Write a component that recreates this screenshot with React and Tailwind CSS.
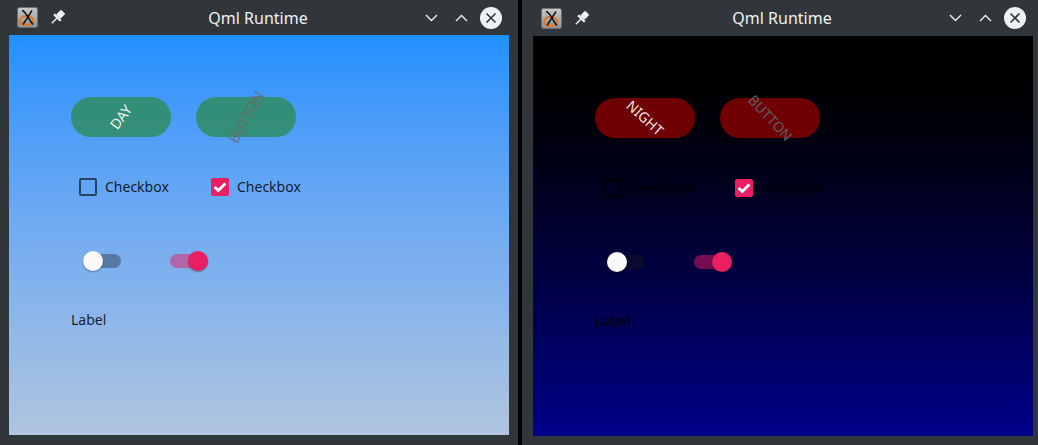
import React from 'react';

const themes = {
  day: {
    titleH: 'h-[35px]',
    bottom: 'h-[10px]',
    content: 'bg-linear-to-b from-[#1e90ff] to-[#b0c4de]',
    button: 'bg-[#2e8b57]/80',
    first: 'DAY',
    firstCls: 'text-[#f4f4f4] rotate-[-53deg]',
    secondCls: 'text-[#6c6c6c] rotate-[-61deg]',
    boxBorder: 'border-black/60',
    text: 'text-black/85',
    trackOff: 'bg-black/30',
    trackOn: 'bg-[#e91e63]/50',
  },
  night: {
    titleH: 'h-[36px]',
    bottom: 'h-[9px]',
    content: 'bg-linear-to-b from-black to-[#00008b]',
    button: 'bg-[#8b0000]/80',
    first: 'NIGHT',
    firstCls: 'text-[#eee6e6] rotate-[42deg]',
    secondCls: 'text-[#5e5e68] rotate-[47deg]',
    boxBorder: 'border-black',
    text: 'text-black',
    trackOff: 'bg-[#0a0a30]',
    trackOn: 'bg-[#e91e63]/50',
  },
};

function AppIcon() {
  return (
    <svg width="21" height="21" viewBox="0 0 21 21">
      <defs>
        <linearGradient id="ai" x1="0" y1="0" x2="0" y2="1">
          <stop offset="0" stopColor="#c9c9c9" />
          <stop offset="1" stopColor="#8e8e8e" />
        </linearGradient>
      </defs>
      <rect x="0.5" y="0.5" width="20" height="20" rx="2" fill="url(#ai)" stroke="#6f6f6f" />
      <ellipse cx="9.5" cy="13.5" rx="6.5" ry="4.5" fill="none" stroke="#e8751a" strokeWidth="1.8" />
      <path d="M5 3.5 C9 4 11 12 16 17.5" fill="none" stroke="#111" strokeWidth="1.6" />
      <path d="M15 3.5 L6 17.5" fill="none" stroke="#111" strokeWidth="1.4" />
    </svg>
  );
}

function PinIcon() {
  return (
    <svg width="15" height="15" viewBox="0 0 14 14">
      <g transform="rotate(45 7 7)" fill="#eff0f1">
        <rect x="4.2" y="-0.5" width="5.6" height="6.5" rx="0.8" />
        <rect x="2.6" y="6" width="8.8" height="2.2" rx="0.5" />
        <rect x="6.3" y="8" width="1.4" height="6.5" />
      </g>
    </svg>
  );
}

function Chevron({ up }) {
  return (
    <svg width="13" height="8" viewBox="0 0 13 8">
      <path
        d={up ? 'M1 7 L6.5 1.5 L12 7' : 'M1 1 L6.5 6.5 L12 1'}
        fill="none"
        stroke="#eff0f1"
        strokeWidth="1.4"
      />
    </svg>
  );
}

function CloseIcon() {
  return (
    <svg width="22" height="22" viewBox="0 0 22 22">
      <circle cx="11" cy="11" r="11" fill="#eff0f1" />
      <path d="M6.5 6.5 L15.5 15.5 M15.5 6.5 L6.5 15.5" stroke="#31363b" strokeWidth="1.6" />
    </svg>
  );
}

function Checkbox({ checked, t }) {
  return (
    <div className="flex items-center gap-2">
      {checked ? (
        <div className="w-[18px] h-[18px] rounded-[2px] bg-[#e91e63] flex items-center justify-center">
          <svg width="18" height="18" viewBox="0 0 18 18">
            <path d="M3.6 9 L7.2 12.6 L14.4 5.4" fill="none" stroke="#fff" strokeWidth="2.8" />
          </svg>
        </div>
      ) : (
        <div className={`w-[18px] h-[18px] rounded-[2px] border-2 ${t.boxBorder}`}></div>
      )}
      <span className={`text-[14px] leading-5 ${t.text}`}>Checkbox</span>
    </div>
  );
}

function Switch({ checked, t }) {
  return (
    <div className="w-[38px] h-5 flex items-center">
      <div className={`w-[38px] h-[14px] rounded-full flex items-center ${checked ? `${t.trackOn} justify-end` : t.trackOff}`}>
        <div
          className={`w-5 h-5 rounded-full shadow-[0_1px_2px_rgba(0,0,0,0.35)] ${
            checked ? 'bg-[#e91e63]' : 'bg-[#fafafa]'
          }`}
        ></div>
      </div>
    </div>
  );
}

function Window({ mode, className }) {
  const t = themes[mode];
  return (
    <div className={`w-[520px] h-[445px] shrink-0 bg-[#31363b] flex flex-col ${className}`}>
      {/* Title bar */}
      <div className={`${t.titleH} grid grid-cols-[1fr_auto_1fr] items-center`}>
        <div className="flex items-center pl-[19px] gap-[12px]">
          <AppIcon />
          <PinIcon />
        </div>
        <div className="text-[16px] text-[#eff0f1]">Qml Runtime</div>
        <div className="flex items-center justify-end pr-[16px]">
          <Chevron />
          <div className="w-[17px]"></div>
          <Chevron up />
          <div className="w-[12px]"></div>
          <CloseIcon />
        </div>
      </div>

      {/* Content */}
      <div className="flex pl-[11px] pr-[9px]">
        <div className={`w-[500px] h-[400px] ${t.content} flex flex-col pl-[62px] pt-[62px]`}>
          <div className="flex gap-[25px]">
            <div className={`w-[100px] h-10 rounded-full ${t.button} flex items-center justify-center`}>
              <span className={`text-[14px] leading-none ${t.firstCls}`}>{t.first}</span>
            </div>
            <div className={`w-[100px] h-10 rounded-full ${t.button} flex items-center justify-center`}>
              <span className={`text-[14px] leading-none ${t.secondCls}`}>BUTTON</span>
            </div>
          </div>

          <div className="flex items-center mt-[41px] pl-2 h-[18px]">
            <div className="w-[132px]">
              <Checkbox t={t} />
            </div>
            <Checkbox checked t={t} />
          </div>

          <div className="flex mt-[55px] pl-3 gap-[49px]">
            <Switch t={t} />
            <Switch checked t={t} />
          </div>

          <div className={`mt-[39px] text-[14px] leading-5 ${t.text}`}>Label</div>
        </div>
      </div>
      <div className={t.bottom}></div>
    </div>
  );
}

export default function App() {
  return (
    <div className="w-[1038px] h-[445px] bg-black flex overflow-hidden font-['Noto_Sans','Open_Sans',sans-serif]">
      <Window mode="day" className="-ml-[2px]" />
      <Window mode="night" className="ml-[4px]" />
    </div>
  );
}
